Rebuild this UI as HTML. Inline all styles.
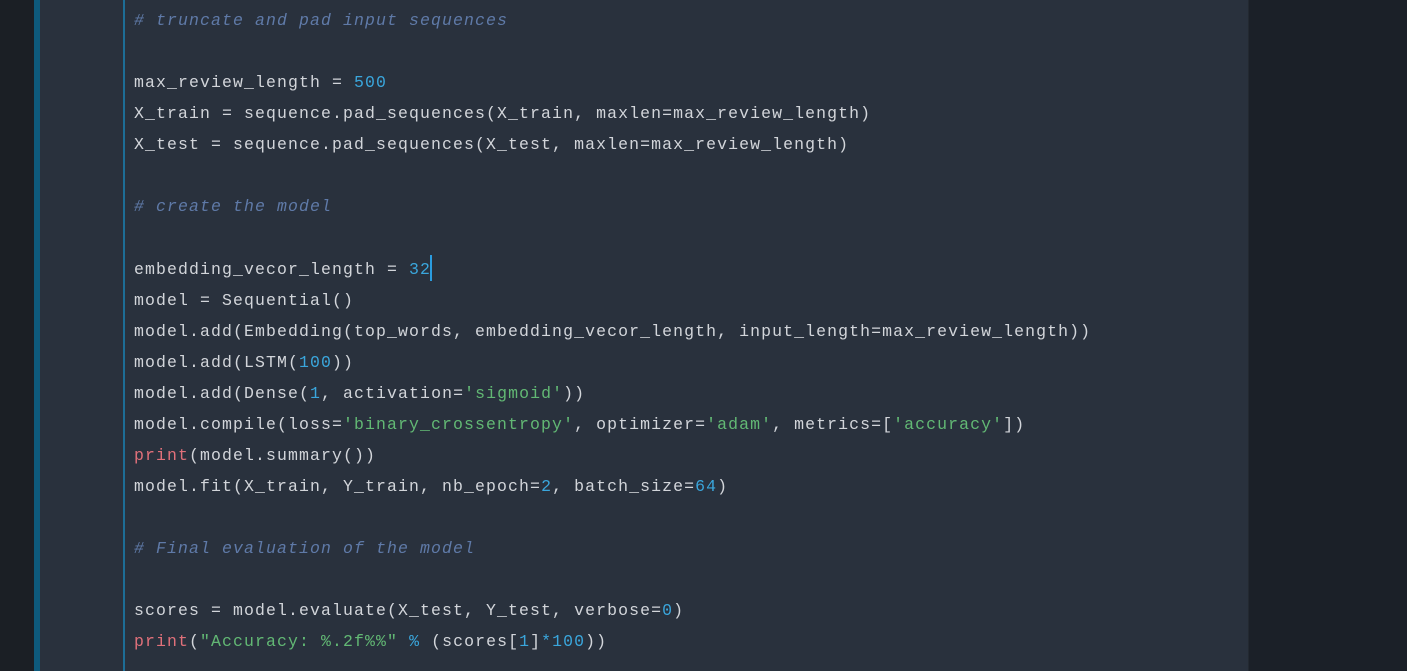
<!DOCTYPE html>
<html><head><meta charset="utf-8"><style>
html,body{margin:0;padding:0;width:1407px;height:671px;overflow:hidden;background:#1b2028;}
.l{position:absolute;left:0;top:0;width:34px;height:671px;background:#1b1f25;}
.b{position:absolute;left:34px;top:0;width:6px;height:671px;background:#0e5a7c;}
.p{position:absolute;left:40px;top:0;width:1208px;height:671px;background:#29313d;}
.r{position:absolute;left:1248px;top:0;width:1px;height:671px;background:#232931;}
.g{position:absolute;left:123px;top:0;width:2px;height:671px;background:#1d6d96;}
pre{position:absolute;left:134px;top:5px;margin:0;font-family:"Liberation Mono",monospace;font-size:16.5px;letter-spacing:1.1px;line-height:31.07px;color:#d2d5da;}
.c{color:#5f7aa8;font-style:italic}
.n{color:#3aa6dc}
.s{color:#62b874}
.k{color:#e0707a}
.cur{display:inline-block;width:2px;height:26px;background:#2a9ce0;vertical-align:-7px;margin-left:-1px}
</style></head><body>
<div class="l"></div><div class="b"></div><div class="p"></div><div class="r"></div><div class="g"></div>
<pre><span class="c"># truncate and pad input sequences</span>

max_review_length = <span class="n">500</span>
X_train = sequence.pad_sequences(X_train, maxlen=max_review_length)
X_test = sequence.pad_sequences(X_test, maxlen=max_review_length)

<span class="c"># create the model</span>

embedding_vecor_length = <span class="n">32</span><span class="cur"></span>
model = Sequential()
model.add(Embedding(top_words, embedding_vecor_length, input_length=max_review_length))
model.add(LSTM(<span class="n">100</span>))
model.add(Dense(<span class="n">1</span>, activation=<span class="s">'sigmoid'</span>))
model.compile(loss=<span class="s">'binary_crossentropy'</span>, optimizer=<span class="s">'adam'</span>, metrics=[<span class="s">'accuracy'</span>])
<span class="k">print</span>(model.summary())
model.fit(X_train, Y_train, nb_epoch=<span class="n">2</span>, batch_size=<span class="n">64</span>)

<span class="c"># Final evaluation of the model</span>

scores = model.evaluate(X_test, Y_test, verbose=<span class="n">0</span>)
<span class="k">print</span>(<span class="s">"Accuracy: %.2f%%"</span> <span class="n">%</span> (scores[<span class="n">1</span>]<span class="n">*</span><span class="n">100</span>))
</pre>
</body></html>
